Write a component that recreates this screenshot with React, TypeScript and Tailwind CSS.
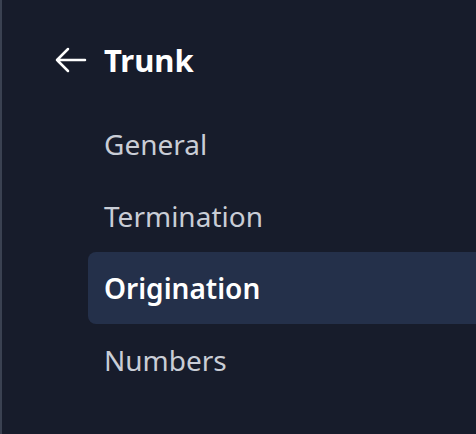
const items = ["General", "Termination", "Origination", "Numbers"];

export default function App() {
  const active = "Origination";
  return (
    <div
      className="h-[434px] w-[476px] overflow-hidden border-l-2 border-[#3a4151] bg-[#171c2b] pl-[53px] pt-[40px]"
      style={{ fontFamily: '"Noto Sans", "Open Sans", sans-serif' }}
    >
      <div className="flex h-[40px] items-center gap-[17px]">
        <svg width="32" height="32" viewBox="0 0 32 32" fill="none" className="shrink-0">
          <path
            d="M13 5 L2 16 L13 27 M2 16 H30"
            stroke="#ffffff"
            strokeWidth="2.5"
            strokeLinecap="round"
            strokeLinejoin="round"
          />
        </svg>
        <h1 className="text-[31px] font-bold leading-none text-white">Trunk</h1>
      </div>
      <nav className="-mr-[10px] ml-[33px] mt-[28px] flex flex-col">
        {items.map((item) => (
          <a
            key={item}
            href="#"
            className={
              item === active
                ? "flex h-[72px] items-center rounded-[8px] bg-[#24304a] px-4 text-[28px] font-semibold text-white"
                : "flex h-[72px] items-center rounded-[8px] px-4 text-[28px] text-[#c9cdd6]"
            }
          >
            {item}
          </a>
        ))}
      </nav>
    </div>
  );
}
